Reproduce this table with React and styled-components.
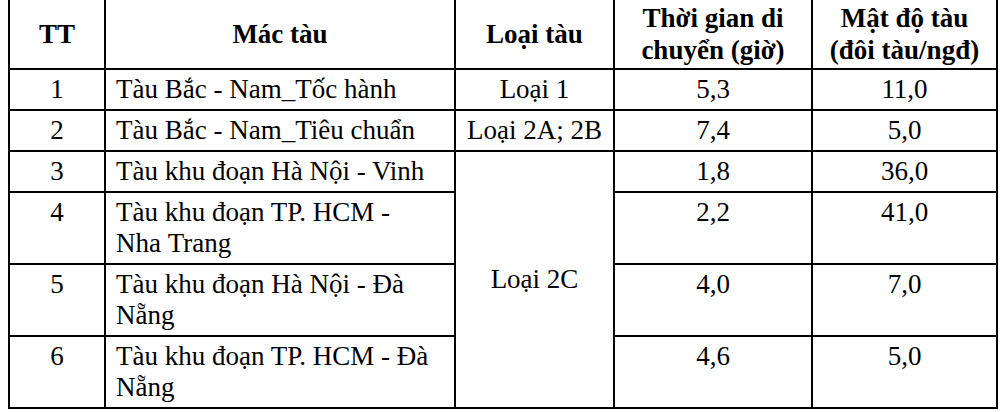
import styled, { createGlobalStyle } from "styled-components";

const SERIF = `"Times New Roman", "Liberation Serif", Tinos, Times, "DejaVu Serif", serif`;

const GlobalStyle = createGlobalStyle`
  html, body {
    margin: 0;
    padding: 0;
    background: #fff;
  }
  body {
    font-family: ${SERIF};
    color: #000;
  }
`;

const Page = styled.div`
  width: 1000px;
  height: 412px;
  overflow: hidden;
  padding-left: 8px;
  box-sizing: border-box;
`;

const Table = styled.table`
  border-collapse: collapse;
  table-layout: fixed;
  width: 990px;
  margin-top: -3px;
  font-family: ${SERIF};
  font-size: 27px;
  color: #000;
`;

const HeadCell = styled.th`
  border: 2px solid #000;
  font-family: ${SERIF};
  font-weight: 700;
  line-height: 32px;
  padding: 3px 4px 2px;
  text-align: center;
  vertical-align: middle;
`;

const Cell = styled.td`
  border: 2px solid #000;
  font-family: ${SERIF};
  line-height: 31px;
  padding: 4px 10px;
  vertical-align: ${(p) => (p.$middle ? "middle" : "top")};
  text-align: ${(p) => (p.$left ? "left" : "center")};
`;

const rows = [
  { tt: 1, name: "Tàu Bắc - Nam_Tốc hành", type: "Loại 1", time: "5,3", density: "11,0" },
  { tt: 2, name: "Tàu Bắc - Nam_Tiêu chuẩn", type: "Loại 2A; 2B", time: "7,4", density: "5,0" },
  { tt: 3, name: "Tàu khu đoạn Hà Nội - Vinh", type: "Loại 2C", span: 4, time: "1,8", density: "36,0" },
  { tt: 4, name: "Tàu khu đoạn TP. HCM - Nha\u00a0Trang", time: "2,2", density: "41,0" },
  { tt: 5, name: "Tàu khu đoạn Hà Nội - Đà Nẵng", time: "4,0", density: "7,0" },
  { tt: 6, name: "Tàu khu đoạn TP. HCM - Đà Nẵng", time: "4,6", density: "5,0" },
];

function App() {
  return (
    <Page>
      <GlobalStyle />
      <Table>
        <colgroup>
          <col style={{ width: 96 }} />
          <col style={{ width: 350 }} />
          <col style={{ width: 159 }} />
          <col style={{ width: 198 }} />
          <col style={{ width: 185 }} />
        </colgroup>
        <thead>
          <tr>
            <HeadCell>TT</HeadCell>
            <HeadCell>Mác tàu</HeadCell>
            <HeadCell>Loại tàu</HeadCell>
            <HeadCell>
              Thời gian di
              <br />
              chuyển (giờ)
            </HeadCell>
            <HeadCell>
              Mật độ tàu
              <br />
              (đôi tàu/ngđ)
            </HeadCell>
          </tr>
        </thead>
        <tbody>
          {rows.map((r) => (
            <tr key={r.tt}>
              <Cell>{r.tt}</Cell>
              <Cell $left>{r.name}</Cell>
              {r.type && (
                <Cell $middle={!!r.span} rowSpan={r.span || 1}>
                  {r.type}
                </Cell>
              )}
              <Cell>{r.time}</Cell>
              <Cell>{r.density}</Cell>
            </tr>
          ))}
        </tbody>
      </Table>
    </Page>
  );
}

export default App;
